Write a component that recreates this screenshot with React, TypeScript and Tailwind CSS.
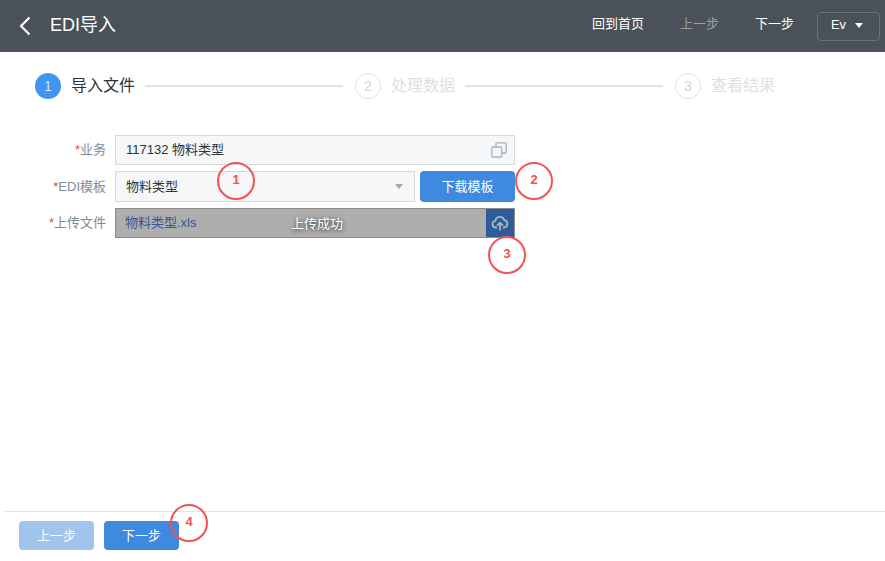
const font = "font-['Liberation_Sans','Noto_Sans_CJK_SC',sans-serif]"

function Step({ n, label, active }: { n: number; label: string; active?: boolean }) {
  return (
    <div className="flex items-center shrink-0">
      <span
        className={
          active
            ? 'w-[26px] h-[26px] rounded-full bg-[#4096f0] text-[#d6e8fb] text-sm flex items-center justify-center'
            : 'w-[26px] h-[26px] rounded-full border border-[#e2e2e2] text-[#d4d4d4] text-sm flex items-center justify-center'
        }
      >
        {n}
      </span>
      <span className={active ? 'ml-[10px] text-base text-[#333]' : 'ml-[10px] text-base text-[#e0e0e0]'}>{label}</span>
    </div>
  )
}

function Mark({ n, className }: { n: number; className: string }) {
  return (
    <span
      className={`absolute w-[38px] h-[38px] pb-[2px] rounded-full border-2 border-[#f85050] text-[#f85050] text-[13px] font-bold flex items-center justify-center ${className}`}
    >
      {n}
    </span>
  )
}

function Label({ text }: { text: string }) {
  return (
    <label className="w-[106px] text-right text-[13px] text-[#7d8a99] shrink-0">
      <span className="text-[#f04040]">*</span>
      {text}
    </label>
  )
}

export default function App() {
  return (
    <div className={`relative w-[885px] h-[561px] bg-white overflow-hidden flex flex-col ${font}`}>
      {/* 顶部 */}
      <header className="h-[52px] bg-[#4a5159] flex items-center shrink-0 text-white">
        <svg viewBox="0 0 12 20" className="ml-[19px] w-[12px] h-[20px]" fill="none" stroke="#fff" strokeWidth="2.2">
          <path d="M10.5 1.5 2 10l8.5 8.5" />
        </svg>
        <h1 className="ml-[19px] pb-[2px] text-lg">EDI导入</h1>
        <nav className="ml-auto flex items-center text-[13px] pb-[4px]">
          <span>回到首页</span>
          <span className="ml-[36px] text-[#9a9fa4]">上一步</span>
          <span className="ml-[36px]">下一步</span>
          <button className="ml-[23px] mr-[5px] mt-[4px] w-[63px] h-[29px] pb-[3px] pr-[3px] border border-[#69717b] rounded-[4px] flex items-center justify-center gap-[9px] text-[13px]">
            Ev
            <span className="mt-[2px] w-0 h-0 border-x-[4.5px] border-x-transparent border-t-[5px] border-t-white" />
          </button>
        </nav>
      </header>

      {/* 步骤 */}
      <div className="flex items-center mt-[21px] pl-[35px] w-[775px]">
        <Step n={1} label="导入文件" active />
        <div className="flex-1 h-[2px] bg-[#e2e2e2] ml-[10px] mr-[12px]" />
        <Step n={2} label="处理数据" />
        <div className="flex-1 h-[2px] bg-[#e2e2e2] ml-[10px] mr-[12px]" />
        <Step n={3} label="查看结果" />
      </div>

      {/* 表单 */}
      <form className="mt-[36px] flex flex-col gap-[6px] text-[13px]">
        <div className="flex items-center">
          <Label text="业务" />
          <div className="ml-[9px] w-[400px] h-[30px] border border-[#d8d8d8] bg-[#f6f7f9] flex items-center pl-[10px] pr-[7px] text-[#333]">
            117132 物料类型
            <svg viewBox="0 0 16 16" className="ml-auto w-[16px] h-[16px]" fill="none" stroke="#a9b2bf" strokeWidth="1.3">
              <rect x="0.8" y="5" width="10" height="10" rx="1" />
              <path d="M5 5V1.6a.8.8 0 0 1 .8-.8h8.6a.8.8 0 0 1 .8.8v8.6a.8.8 0 0 1-.8.8H11" />
            </svg>
          </div>
        </div>

        <div className="flex items-center">
          <Label text="EDI模板" />
          <div className="ml-[9px] w-[300px] h-[31px] border border-[#d8d8d8] bg-[#f6f7f9] flex items-center pl-[10px] pr-[11px] text-[#333]">
            物料类型
            <span className="ml-auto w-0 h-0 border-x-[4.5px] border-x-transparent border-t-[5px] border-t-[#a8a8a8]" />
          </div>
          <button type="button" className="ml-[5px] w-[95px] h-[31px] rounded-[4px] bg-[#3f8ade] text-white text-[13px]">
            下载模板
          </button>
        </div>

        <div className="flex items-center">
          <Label text="上传文件" />
          <div className="relative ml-[9px] w-[400px] h-[30px] border border-[#8c8c8c] bg-[#aeaeae] flex items-center pl-[9px] text-[#33578f]">
            物料类型.xls
            <span className="absolute left-[175px] top-[5px] text-white [text-shadow:0_1px_4px_rgba(0,0,0,0.85)]">上传成功</span>
            <span className="ml-auto w-[28px] h-full bg-[#2d5d98] flex items-center justify-center">
              <svg viewBox="0 0 24 24" className="w-[18px] h-[18px]" fill="none" stroke="#a9b4c0" strokeWidth="2.4" strokeLinejoin="round">
                <path d="M8 18H6.5a4.5 4.5 0 0 1-.6-8.96A6 6 0 0 1 17.6 8.1 5 5 0 0 1 17.5 18H16" />
                <path d="M12 22v-10M8 15.5l4-4 4 4" />
              </svg>
            </span>
          </div>
        </div>
      </form>

      {/* 底部 */}
      <footer className="mt-auto ml-[4px] h-[50px] border-t border-[#e5e5e5] flex items-start pt-[9px] pl-[15px] gap-[10px] text-[13px] text-white">
        <button className="w-[75px] h-[29px] rounded-[4px] bg-[#a0c4ee]">上一步</button>
        <button className="w-[75px] h-[29px] rounded-[4px] bg-[#3f8ade]">下一步</button>
      </footer>

      <Mark n={1} className="left-[217px] top-[162px]" />
      <Mark n={2} className="left-[515px] top-[162px]" />
      <Mark n={3} className="left-[488px] top-[236px]" />
      <Mark n={4} className="left-[170px] top-[504px]" />
    </div>
  )
}
